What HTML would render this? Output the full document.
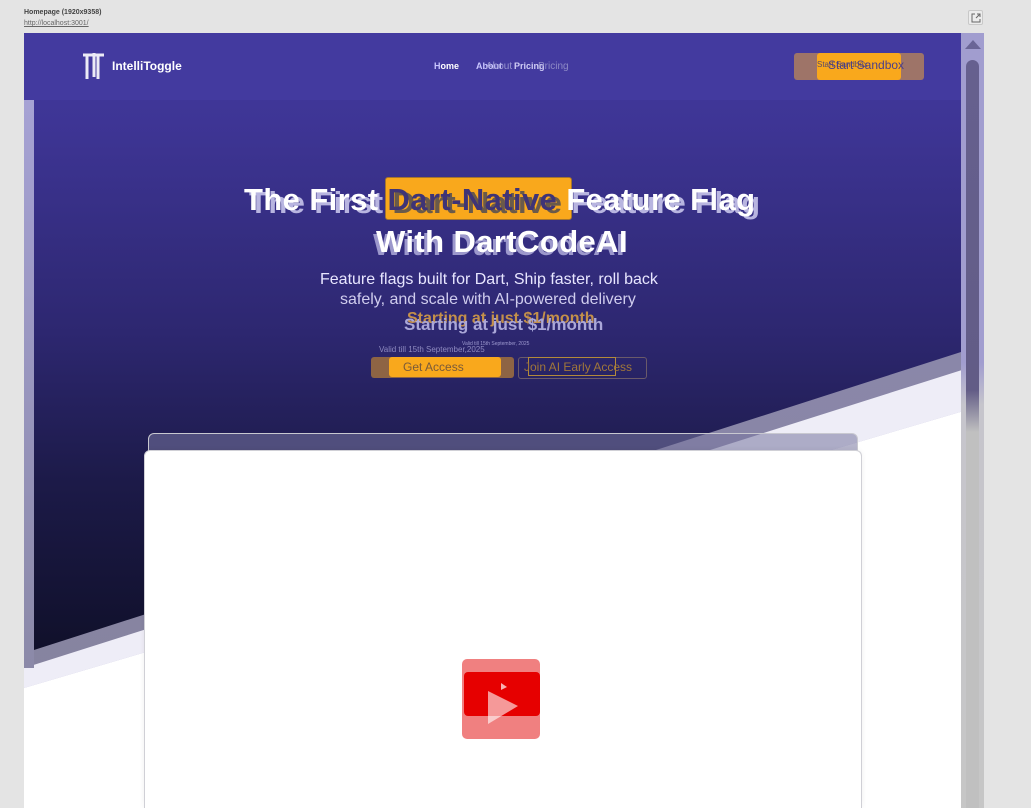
<!DOCTYPE html>
<html><head><meta charset="utf-8"><style>
*{margin:0;padding:0;box-sizing:border-box}
html,body{width:1031px;height:808px;overflow:hidden}
body{background:#e4e4e4;position:relative;font-family:"Liberation Sans",sans-serif}
.abs{position:absolute}
.t{color:#fff;font-weight:bold;white-space:nowrap}
</style></head><body>
<div class="abs" style="left:24px;top:9px;font-size:7px;font-weight:bold;color:#444">Homepage (1920x9358)</div>
<div class="abs" style="left:24px;top:20px;font-size:7px;color:#666;text-decoration:underline">http://localhost:3001/</div>
<div class="abs" style="left:968px;top:10px;width:15px;height:15px;border:1px solid #c8c8c8;border-radius:2px;background:#ececec"></div>
<svg class="abs" style="left:971px;top:13px" width="10" height="10" viewBox="0 0 10 10"><path d="M4 1H1V9H9V6M5 5L9 1M6 1H9V4" fill="none" stroke="#666" stroke-width="1"/></svg>

<div class="abs" style="left:24px;top:33px;width:960px;height:775px;background:#fff;overflow:hidden">
  <div class="abs" style="left:0;top:0;width:960px;height:660px;background:#b9b6d6;clip-path:polygon(0 0,100% 0,100% 372px,0 655px)"></div>
  <div class="abs" style="left:0;top:0;width:960px;height:660px;background:#eeedf7;clip-path:polygon(0 620px,100% 330px,100% 372px,0 655px)"></div>
  <div class="abs" style="left:0;top:0;width:960px;height:660px;background:linear-gradient(#8e8bb3,#86839f);clip-path:polygon(0 0,100% 0,100% 330px,0 635px)"></div>
  <div class="abs" style="left:10px;top:0;width:927px;height:640px;background:linear-gradient(#433a9f 0px,#3e3595 90px,#2d2770 300px,#1c1a48 450px,#10102a 620px);clip-path:polygon(0 0,100% 0,100% 319px,0 617px)"></div>
  <div class="abs" style="left:0;top:0;width:960px;height:67px;background:#433a9f"></div>
  <div class="abs" style="left:0;top:67px;width:10px;height:568px;background:linear-gradient(#a6a2d4,#8b89a8)"></div>

  <svg class="abs" style="left:58px;top:18px" width="24" height="30" viewBox="0 0 24 30"><path d="M1 4H22M5 4V28M12 2V26M16 4V28" stroke="#fff" stroke-width="3" fill="none" opacity=".9"/></svg>
  <div class="abs t" style="left:88px;top:26px;font-size:12px">IntelliToggle</div>
  <div class="abs t" style="left:410px;top:28px;font-size:9px;color:#c9c6ff">H<span style="color:#fff">ome</span></div>
  <div class="abs t" style="left:452px;top:28px;font-size:9px;color:#c9c6ff">About</div>
  <div class="abs" style="left:462px;top:28px;font-size:10px;color:#9a96d0">About</div>
  <div class="abs t" style="left:490px;top:28px;font-size:9px;color:#d0cdf5">Pricing</div>
  <div class="abs" style="left:514px;top:28px;font-size:10px;color:#8e8ac6">Pricing</div>
  <div class="abs" style="left:770px;top:20px;width:130px;height:27px;background:#9e7468;border-radius:3px"></div>
  <div class="abs" style="left:793px;top:20px;width:84px;height:27px;background:#f9a81c;border-radius:3px"></div>
  <div class="abs" style="left:793px;top:27px;font-size:8px;color:#5a4a6a">Start Sandbox</div>
  <div class="abs" style="left:804px;top:25px;font-size:12px;color:#4a3f8a">Start Sandbox</div>

  <div class="abs" style="left:361px;top:144px;width:187px;height:43px;background:#f9a81c;border:1px solid #a5752e;border-radius:3px"></div>
  <div class="abs t" style="left:225px;top:152px;font-size:31px;color:#b8b5e0;letter-spacing:.4px">The First <span style="color:#6a5a4a">Dart-Native</span> Feature Flag</div>
  <div class="abs t" style="left:220px;top:149px;font-size:31px;letter-spacing:.4px">The First <span style="color:#3f3476">Dart-Native</span> Feature Flag</div>
  <div class="abs t" style="left:349px;top:194px;font-size:31px;color:#9c98cc;letter-spacing:.4px">With DartCodeAI</div>
  <div class="abs t" style="left:352px;top:191px;font-size:31px;letter-spacing:.4px">With DartCodeAI</div>
  <div class="abs" style="left:296px;top:238px;font-size:16px;color:#e8e6ff">Feature flags built for Dart, Ship faster, roll back</div>
  <div class="abs" style="left:316px;top:258px;font-size:16px;color:#d0cdee">safely, and scale with AI-powered delivery</div>
  <div class="abs" style="left:383px;top:277px;font-size:16px;color:#c4904a;font-weight:bold">Starting at just $1/month</div>
  <div class="abs" style="left:380px;top:282px;font-size:17px;color:#aaa7d8;font-weight:bold">Starting at just $1/month</div>
  <div class="abs" style="left:438px;top:308px;font-size:5px;color:#9e9ad0">Valid till 15th September, 2025</div>
  <div class="abs" style="left:355px;top:312px;font-size:8px;color:#8e8ac0">Valid till 15th September,2025</div>
  <div class="abs" style="left:347px;top:324px;width:143px;height:21px;background:#8e6444;border-radius:3px"></div>
  <div class="abs" style="left:365px;top:324px;width:112px;height:20px;background:#f9a81c;border-radius:3px"></div>
  <div class="abs" style="left:379px;top:327px;font-size:12px;color:#7a5a3a">Get Access</div>
  <div class="abs" style="left:494px;top:324px;width:129px;height:22px;border:1px solid #6a5a6a;border-radius:3px"></div>
  <div class="abs" style="left:504px;top:324px;width:88px;height:19px;border:1px solid #b38a3a"></div>
  <div class="abs" style="left:500px;top:327px;font-size:12px;color:#a0763a">Join AI Early Access</div>

  <div class="abs" style="left:124px;top:400px;width:710px;height:375px;border:1px solid #c8c8d0;border-radius:6px;background:rgba(120,118,160,.55)"></div>
  <div class="abs" style="left:120px;top:417px;width:718px;height:358px;border:1px solid #d0d0d6;border-bottom:none;border-radius:6px 6px 0 0;background:#fff;box-shadow:0 0 6px rgba(0,0,0,.06)"></div>
  <div class="abs" style="left:438px;top:626px;width:78px;height:80px;background:#f08080;border-radius:5px"></div>
  <div class="abs" style="left:440px;top:639px;width:76px;height:44px;background:#e60000;border-radius:4px"></div>
  <svg class="abs" style="left:460px;top:648px" width="36" height="46" viewBox="0 0 36 46"><path d="M4 10L34 25L4 43Z" fill="#fff" opacity=".6"/><path d="M17 2L23 6L17 9Z" fill="#fff" opacity=".7"/></svg>

  <div class="abs" style="left:937px;top:0;width:23px;height:775px;background:linear-gradient(#a19dcf 0,#a19dcf 330px,#c6c5cc 372px,#c6c6c6 100%)"></div>
  <div class="abs" style="left:942px;top:27px;width:13px;height:748px;background:linear-gradient(#66608f 0,#625c86 330px,#c0c0c0 372px,#c0c0c0 100%);border-radius:7px 7px 0 0"></div>
  <div class="abs" style="left:941px;top:7px;width:0;height:0;border-left:8px solid transparent;border-right:8px solid transparent;border-bottom:9px solid #6a6596"></div>
</div>
</body></html>
